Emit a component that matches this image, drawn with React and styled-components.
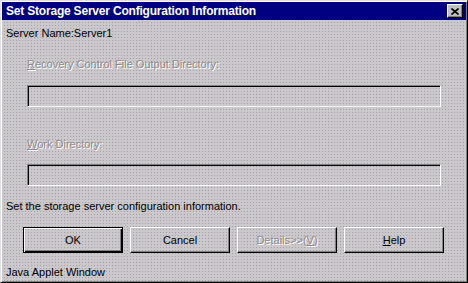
import React from 'react'
import styled, { createGlobalStyle } from 'styled-components'

// Win95-ish dialog, dithered grey surface

const Global = createGlobalStyle`
  html, body {
    margin: 0;
    padding: 0;
    background: #c0c0c0;
  }
  body {
    font-family: "Liberation Sans", Arial, sans-serif;
    font-size: 11px;
    color: #000;
  }
`

const dither = `
  background-color: #cbc8cb;
  background-image: conic-gradient(from 270deg at 1px 1px, #a69ea8 25%, transparent 0);
  background-size: 3px 3px;
`

const Window = styled.div`
  width: 468px;
  height: 283px;
  box-sizing: border-box;
  ${dither}
  border-top: 1px solid #e0e0e0;
  border-left: 1px solid #e0e0e0;
  border-right: 1px solid #000;
  border-bottom: 1px solid #000;
  box-shadow: inset 1px 1px 0 #fff, inset -1px -1px 0 #808080;
  padding: 1px;
  overflow: hidden;
`

const TitleBar = styled.div`
  height: 18px;
  background: #000080;
  display: flex;
  align-items: center;
  justify-content: space-between;
  padding: 0 3px 0 4px;
`

const Title = styled.span`
  color: #fff;
  font-weight: bold;
  font-size: 12px;
  letter-spacing: -0.2px;
`

const CloseButton = styled.div`
  width: 16px;
  height: 14px;
  box-sizing: border-box;
  background: #c0c0c0;
  border-top: 1px solid #fff;
  border-left: 1px solid #fff;
  border-right: 1px solid #000;
  border-bottom: 1px solid #000;
  box-shadow: inset -1px -1px 0 #808080;
  display: flex;
  align-items: center;
  justify-content: center;
`

const Body = styled.div`
  padding: 0 4px;
`

const Text = styled.div`
  line-height: 13px;
  margin-top: ${(p) => p.$mt || 0}px;
  padding-left: ${(p) => p.$indent || 0}px;
  white-space: nowrap;
`

const Disabled = styled.span`
  color: #8e8a8e;
  text-shadow: 1px 1px 0 #fff;
`

const Field = styled.div`
  margin: ${(p) => p.$mt}px 0 0 21px;
  width: 414px;
  height: 22px;
  box-sizing: border-box;
  border-top: 1px solid #808080;
  border-left: 1px solid #808080;
  border-right: 1px solid #fff;
  border-bottom: 1px solid #fff;
  box-shadow: inset 1px 1px 0 #000;
`

const ButtonRow = styled.div`
  display: flex;
  gap: 7px;
  margin-top: 14px;
  padding-left: 17px;
`

const Button = styled.div`
  width: 100px;
  height: 26px;
  box-sizing: border-box;
  display: flex;
  align-items: center;
  justify-content: center;
  border-top: 1px solid ${(p) => (p.$default ? '#000' : '#fff')};
  border-left: 1px solid ${(p) => (p.$default ? '#000' : '#fff')};
  border-right: 1px solid #000;
  border-bottom: 1px solid #000;
  box-shadow: ${(p) =>
    p.$default
      ? 'inset 1px 1px 0 #fff, inset -1px -1px 0 #000, inset -2px -2px 0 #808080'
      : 'inset -1px -1px 0 #808080'};
  font-size: 11px;
`

const Key = styled.u`
  text-decoration: underline;
  text-underline-offset: 1px;
`

const App = () => {
  return (
    <>
      <Global />
      <Window>
        <TitleBar>
          <Title>Set Storage Server Configuration Information</Title>
          <CloseButton>
            <svg width="8" height="7" viewBox="0 0 8 7">
              <path d="M0.5 0.5 L7.5 6.5 M7.5 0.5 L0.5 6.5" stroke="#000" strokeWidth="1.6" />
            </svg>
          </CloseButton>
        </TitleBar>
        <Body>
          <Text $mt={7}>Server Name:Server1</Text>
          <Text $mt={18} $indent={21}>
            <Disabled><Key>R</Key>ecovery Control File Output Directory:</Disabled>
          </Text>
          <Field $mt={14} />
          <Text $mt={31} $indent={21}>
            <Disabled><Key>W</Key>ork Directory:</Disabled>
          </Text>
          <Field $mt={13} />
          <Text $mt={14}>Set the storage server configuration information.</Text>
          <ButtonRow>
            <Button $default>OK</Button>
            <Button>Cancel</Button>
            <Button>
              <Disabled>Details&gt;&gt;(<Key>V</Key>)</Disabled>
            </Button>
            <Button>
              <span><Key>H</Key>elp</span>
            </Button>
          </ButtonRow>
          <Text $mt={13}>Java Applet Window</Text>
        </Body>
      </Window>
    </>
  )
}

export default App
